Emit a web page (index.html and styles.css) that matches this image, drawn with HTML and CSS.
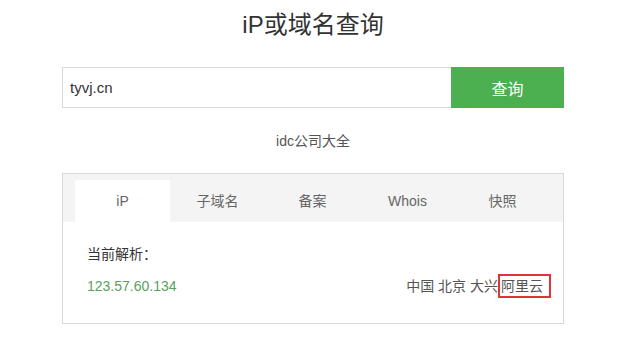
FILE: index.html
```html
<!DOCTYPE html>
<html lang="zh-CN">
<head>
  <meta charset="UTF-8" />
  <meta name="viewport" content="width=device-width, initial-scale=1" />
  <title>iP或域名查询</title>
  <link rel="stylesheet" href="styles.css">
</head>
<body>

  <div class="page">
    <h1 class="title">iP或域名查询</h1>

    <form class="search">
      <input type="text" class="search-input" value="tyvj.cn">
      <button type="button" class="search-btn">查询</button>
    </form>

    <p class="links"><a href="#">idc公司大全</a></p>

    <div class="card">
      <ul class="tabs">
        <li class="tab active">iP</li>
        <li class="tab">子域名</li>
        <li class="tab">备案</li>
        <li class="tab">Whois</li>
        <li class="tab">快照</li>
      </ul>
      <div class="card-body">
        <div class="label">当前解析：</div>
        <div class="row">
          <span class="ip">123.57.60.134</span>
          <span class="location">中国 北京 大兴<span class="isp">阿里云</span></span>
        </div>
      </div>
    </div>
  </div>

</body>
</html>
```

FILE: styles.css
```css
:root {
  --green: #4caf50;
  --border: #d9d9d9;
  --tab-bg: #f4f4f4;
  --text: #333;
  --muted: #666;
}

body {
  margin: 0;
  padding: 0 7px 0 0;
  background: #fff;
  color: var(--text);
  font-family: "Liberation Sans", Arial, "Noto Sans CJK SC", sans-serif;
  font-size: 14px;
}

.page {
  width: 502px;
  margin: 0 auto;
}

.title {
  margin: 0;
  padding-top: 9px;
  height: 67px;
  box-sizing: border-box;
  text-align: center;
  font-size: 24px;
  font-weight: normal;
  line-height: 32px;
  color: #333;
}

.search {
  display: flex;
  height: 41px;
  margin: 0;
}

.search-input {
  flex: 1;
  min-width: 0;
  margin: 0;
  padding: 0 7px;
  border: 1px solid var(--border);
  border-right: none;
  font-family: inherit;
  font-size: 15px;
  color: #333;
  outline: none;
}

.search-btn {
  width: 113px;
  margin: 0;
  border: none;
  background: var(--green);
  color: #fff;
  font-family: inherit;
  font-size: 16px;
  cursor: pointer;
}

.links {
  margin: 0;
  height: 65px;
  padding-top: 23px;
  box-sizing: border-box;
  text-align: center;
  line-height: 20px;
}

.links a {
  color: #555;
  text-decoration: none;
}

.card {
  height: 151px;
  box-sizing: border-box;
  border: 1px solid var(--border);
}

.tabs {
  display: flex;
  margin: 0;
  padding: 6px 0 0 12px;
  list-style: none;
  background: var(--tab-bg);
}

.tab {
  width: 95px;
  height: 42px;
  line-height: 42px;
  text-align: center;
  color: var(--muted);
}

.tab.active {
  background: #fff;
}

.card-body {
  padding: 22px 12px 0 24px;
}

.label {
  line-height: 20px;
  color: #333;
}

.row {
  display: flex;
  justify-content: space-between;
  align-items: center;
  margin-top: 10px;
  line-height: 20px;
}

.ip {
  color: #5a9f5a;
}

.location {
  color: #555;
}

.isp {
  display: inline-block;
  border: 2px solid #e2323a;
  padding: 0 6px 0 1px;
  line-height: 20px;
}
```
